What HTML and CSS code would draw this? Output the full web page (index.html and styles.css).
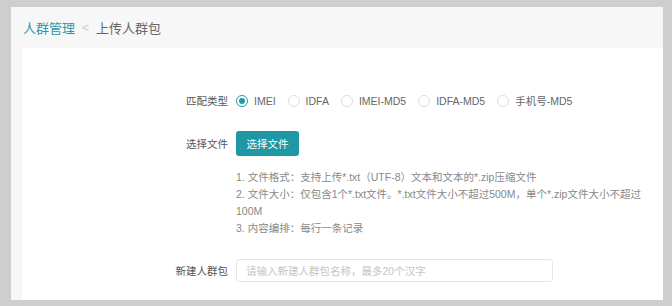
FILE: index.html
```html
<!DOCTYPE html>
<html lang="zh-CN">
<head>
    <meta charset="UTF-8">
    <meta name="viewport" content="width=device-width, initial-scale=1.0">
    <title>上传人群包</title>
    <link rel="stylesheet" href="styles.css">
</head>
<body>
    <div id="main">
        <div class="crumb">
            <a href="#" class="crumb-link">人群管理</a>
            <span class="crumb-sep">&lt;</span>
            <span class="crumb-cur">上传人群包</span>
        </div>

        <div class="card">
            <form action="#" name="form1" method="POST">
                <div class="row row-type">
                    <span class="label">匹配类型</span>
                    <div class="radios">
                        <label class="radio"><input type="radio" name="leixing" value="IMEI" checked><span class="dot"></span>IMEI</label>
                        <label class="radio"><input type="radio" name="leixing" value="IDFA"><span class="dot"></span>IDFA</label>
                        <label class="radio"><input type="radio" name="leixing" value="IMEI-MD5"><span class="dot"></span>IMEI-MD5</label>
                        <label class="radio"><input type="radio" name="leixing" value="IDFA-MD5"><span class="dot"></span>IDFA-MD5</label>
                        <label class="radio"><input type="radio" name="leixing" value="手机号-MD5"><span class="dot"></span>手机号-MD5</label>
                    </div>
                </div>

                <div class="row row-file">
                    <span class="label">选择文件</span>
                    <input type="button" class="btn" value="选择文件">
                </div>

                <div class="tips">
                    <p>1. 文件格式：支持上传*.txt（UTF-8）文本和文本的*.zip压缩文件</p>
                    <p>2. 文件大小：仅包含1个*.txt文件。*.txt文件大小不超过500M，单个*.zip文件大小不超过100M</p>
                    <p>3. 内容编排：每行一条记录</p>
                </div>

                <div class="row row-name">
                    <span class="label">新建人群包</span>
                    <input type="text" name="tenrenqun" placeholder="请输入新建人群包名称，最多20个汉字">
                </div>
            </form>
        </div>
    </div>
</body>
</html>
```

FILE: styles.css
```css
* {
    padding: 0;
    margin: 0;
    box-sizing: border-box;
}
body {
    background-color: #cecece;
    font-family: "Liberation Sans", "Noto Sans CJK SC", sans-serif;
    font-size: 10.5px;
    color: #555;
}
#main {
    background-color: #f7f7f7;
    margin: 7px 9px 0 11px;
    height: 293px;
    overflow: hidden;
}
.crumb {
    height: 41px;
    display: flex;
    align-items: center;
    padding-left: 12px;
    font-size: 13px;
}
.crumb-link {
    color: #1f9ba7;
    text-decoration: none;
}
.crumb-sep {
    color: #ccc;
    margin: 0 7px;
    font-size: 12px;
}
.crumb-cur {
    color: #666;
}
.card {
    background-color: white;
    margin-left: 11px;
    height: 252px;
    padding-top: 45px;
}
.row {
    display: flex;
    align-items: center;
}
.row .label {
    width: 206px;
    text-align: right;
    margin-right: 8px;
    color: #555;
}
.radios {
    display: flex;
    align-items: center;
}
.radio {
    display: flex;
    align-items: center;
    margin-right: 12px;
    color: #666;
    cursor: pointer;
}
/*Hide the browser's default radio*/
.radio input {
    position: absolute;
    opacity: 0;
    width: 0;
    height: 0;
}
.radio .dot {
    width: 12px;
    height: 12px;
    border: 1px solid #ddd;
    border-radius: 50%;
    margin-right: 6px;
    display: flex;
    align-items: center;
    justify-content: center;
}
.radio input:checked ~ .dot {
    border-color: #1f9ba7;
}
.radio input:checked ~ .dot::after {
    content: "";
    width: 6px;
    height: 6px;
    border-radius: 50%;
    background-color: #1f9ba7;
}
.row-file {
    margin-top: 23px;
}
input[type=button] {
    background-color: #1f97a5;
    border: none;
    border-radius: 3px;
    color: white;
    font-family: inherit;
    font-size: 10.5px;
    width: 63px;
    height: 25px;
    cursor: pointer;
}
.tips {
    margin: 13px 0 0 214px;
    width: 408px;
    color: #888;
    line-height: 17px;
}
.row-name {
    margin-top: 22px;
}
input[type=text] {
    width: 317px;
    height: 23px;
    border: 1px solid #e6e6e6;
    border-radius: 3px;
    padding: 0 9px;
    font-family: inherit;
    font-size: 10.5px;
    color: #555;
    outline: none;
}
input[type=text]::placeholder {
    color: #c4c4c4;
}
```
